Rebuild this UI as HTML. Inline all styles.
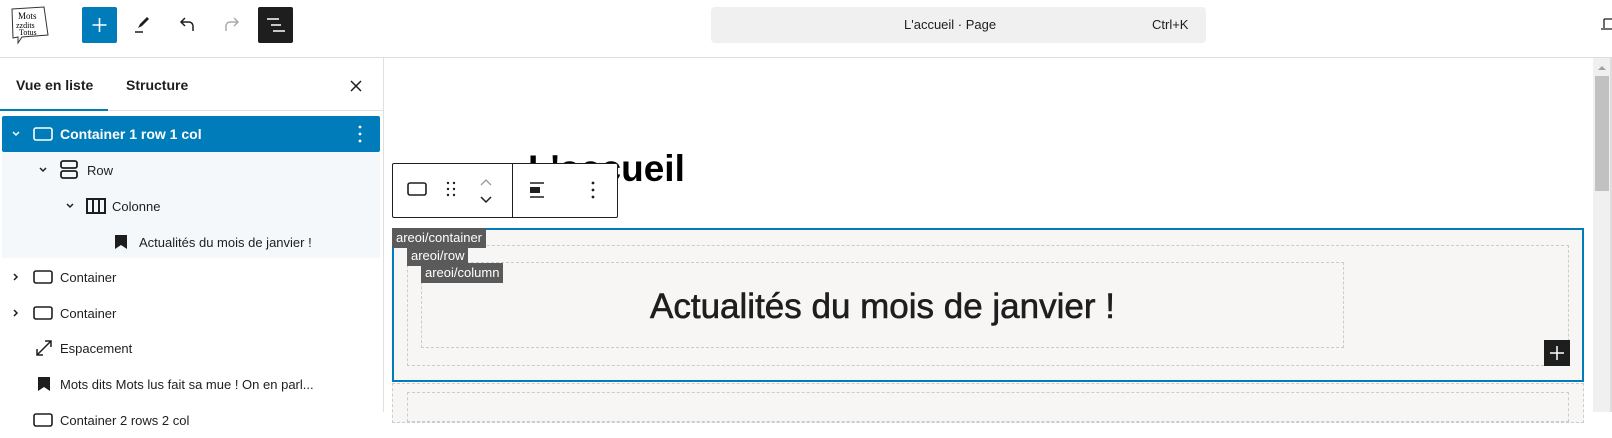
<!DOCTYPE html>
<html><head><meta charset="utf-8"><style>
*{box-sizing:border-box;margin:0;padding:0}
body{width:1612px;height:412px;overflow:hidden;background:#fff;font-family:"Liberation Sans",sans-serif;color:#1e1e1e;position:relative}
.a{position:absolute}
.row{position:absolute;left:2px;width:378px;height:36px;font-size:13px;display:flex;align-items:center}
.lbl{position:absolute;background:#5a5a5a;color:#fff;font-size:13px;height:20px;line-height:20px;padding:0 4px}
</style></head><body>
<!-- top bar -->
<div class="a" style="left:0;top:57px;width:1612px;height:1px;background:#ddd"></div>
<svg class="a" style="left:10px;top:5px" width="42" height="40" viewBox="0 0 42 40"><path d="M2 4 L34 2 L38 30 L12 32 L8 38 L8 32 L3 33Z" fill="#fff" stroke="#333" stroke-width="1"/><text x="8" y="14" font-size="9" font-family="Liberation Serif">Mots</text><text x="6" y="23" font-size="8" font-family="Liberation Serif">zzdits</text><text x="9" y="30" font-size="8" font-family="Liberation Serif">Totus</text></svg>
<div class="a" style="left:82px;top:7px;width:35px;height:36px;background:#007cba;border-radius:2px"></div>
<svg class="a" style="left:82px;top:7px" width="35" height="36"><path d="M17.5 11v14M10.5 18h14" stroke="#fff" stroke-width="1.6"/></svg>
<svg class="a" style="left:130px;top:12px" width="24" height="24"><path d="M8 16l2-4 7-7 2 2-7 7z" fill="#1e1e1e"/><path d="M5 20h8" stroke="#1e1e1e" stroke-width="1.5"/></svg>
<svg class="a" style="left:175px;top:12px" width="24" height="24"><path d="M18 19v-5a4 4 0 0 0-4-4H6M10 6l-4 4 4 4" fill="none" stroke="#1e1e1e" stroke-width="1.5"/></svg>
<svg class="a" style="left:220px;top:12px" width="24" height="24"><path d="M6 19v-5a4 4 0 0 1 4-4h8M14 6l4 4-4 4" fill="none" stroke="#aaa" stroke-width="1.5"/></svg>
<div class="a" style="left:258px;top:7px;width:35px;height:36px;background:#1e1e1e;border-radius:2px"></div>
<svg class="a" style="left:258px;top:7px" width="35" height="36"><path d="M9 12h12M13 18h10M15 24h12" stroke="#fff" stroke-width="1.5"/></svg>
<div class="a" style="left:711px;top:7px;width:495px;height:36px;background:#f0f0f0;border-radius:4px;font-size:13px;color:#1e1e1e"><span class="a" style="left:193px;top:10px">L'accueil · Page</span><span class="a" style="left:441px;top:10px">Ctrl+K</span></div>
<svg class="a" style="left:1600px;top:16px" width="12" height="16"><path d="M4 3h10v9M4 3v9M1 13h13" fill="none" stroke="#1e1e1e" stroke-width="1.3"/></svg>
<!-- sidebar -->
<div class="a" style="left:0;top:58px;width:384px;height:354px;background:#fff;border-right:1px solid #e0e0e0"></div>
<div class="a" style="left:16px;top:77px;font-size:14px;font-weight:bold">Vue en liste</div>
<div class="a" style="left:126px;top:77px;font-size:14px;font-weight:bold">Structure</div>
<svg class="a" style="left:348px;top:78px" width="16" height="16"><path d="M3 3l10 10M13 3L3 13" stroke="#1e1e1e" stroke-width="1.5"/></svg>
<div class="a" style="left:0;top:110px;width:384px;height:1px;background:#e0e0e0"></div>
<div class="a" style="left:0;top:109px;width:108px;height:2px;background:#007cba"></div>
<div class="a" style="left:2px;top:152px;width:378px;height:106px;background:#f5f8fb"></div>
<div class="row" style="top:116px;background:#007cba;color:#fff;border-radius:2px;font-weight:bold;font-size:14px">
<svg class="a" style="left:8px;top:12px" width="12" height="12"><path d="M3 4l3 3 3-3" fill="none" stroke="#fff" stroke-width="1.5"/></svg>
<svg class="a" style="left:30px;top:9px" width="22" height="18"><rect x="2" y="3" width="18" height="12" rx="2" fill="none" stroke="#fff" stroke-width="1.6"/></svg>
<span class="a" style="left:58px;top:10px">Container 1 row 1 col</span>
<svg class="a" style="left:355px;top:8px" width="6" height="20"><circle cx="3" cy="3" r="1.4" fill="#fff"/><circle cx="3" cy="10" r="1.4" fill="#fff"/><circle cx="3" cy="17" r="1.4" fill="#fff"/></svg></div>
<div class="row" style="top:152px">
<svg class="a" style="left:35px;top:12px" width="12" height="12"><path d="M3 4l3 3 3-3" fill="none" stroke="#1e1e1e" stroke-width="1.5"/></svg>
<svg class="a" style="left:56px;top:6px" width="22" height="24"><rect x="3" y="3" width="16" height="7" rx="2" fill="none" stroke="#1e1e1e" stroke-width="1.8"/><rect x="3" y="13" width="16" height="7" rx="2" fill="none" stroke="#1e1e1e" stroke-width="1.8"/></svg>
<span class="a" style="left:85px;top:11px">Row</span></div>
<div class="row" style="top:188px">
<svg class="a" style="left:62px;top:12px" width="12" height="12"><path d="M3 4l3 3 3-3" fill="none" stroke="#1e1e1e" stroke-width="1.5"/></svg>
<svg class="a" style="left:83px;top:8px" width="22" height="20"><rect x="2" y="3" width="18" height="14" fill="none" stroke="#1e1e1e" stroke-width="2"/><path d="M8 3v14M14 3v14" stroke="#1e1e1e" stroke-width="2"/></svg>
<span class="a" style="left:110px;top:11px">Colonne</span></div>
<div class="row" style="top:224px">
<svg class="a" style="left:112px;top:10px" width="14" height="16"><path d="M1 1h12v14l-6-4-6 4z" fill="#1e1e1e"/></svg>
<span class="a" style="left:137px;top:11px">Actualités du mois de janvier !</span></div>
<div class="row" style="top:259px">
<svg class="a" style="left:8px;top:12px" width="12" height="12"><path d="M4 3l3 3-3 3" fill="none" stroke="#1e1e1e" stroke-width="1.5"/></svg>
<svg class="a" style="left:30px;top:9px" width="22" height="18"><rect x="2" y="3" width="18" height="12" rx="2" fill="none" stroke="#1e1e1e" stroke-width="1.6"/></svg>
<span class="a" style="left:58px;top:11px">Container</span></div>
<div class="row" style="top:295px">
<svg class="a" style="left:8px;top:12px" width="12" height="12"><path d="M4 3l3 3-3 3" fill="none" stroke="#1e1e1e" stroke-width="1.5"/></svg>
<svg class="a" style="left:30px;top:9px" width="22" height="18"><rect x="2" y="3" width="18" height="12" rx="2" fill="none" stroke="#1e1e1e" stroke-width="1.6"/></svg>
<span class="a" style="left:58px;top:11px">Container</span></div>
<div class="row" style="top:330px">
<svg class="a" style="left:32px;top:8px" width="20" height="20"><path d="M3 17L17 3M11 3h6v6M3 11v6h6" fill="none" stroke="#1e1e1e" stroke-width="1.5"/></svg>
<span class="a" style="left:58px;top:11px">Espacement</span></div>
<div class="row" style="top:366px">
<svg class="a" style="left:35px;top:10px" width="14" height="16"><path d="M1 1h12v14l-6-4-6 4z" fill="#1e1e1e"/></svg>
<span class="a" style="left:58px;top:11px">Mots dits Mots lus fait sa mue ! On en parl...</span></div>
<div class="row" style="top:402px">
<svg class="a" style="left:30px;top:9px" width="22" height="18"><rect x="2" y="3" width="18" height="12" rx="2" fill="none" stroke="#1e1e1e" stroke-width="1.6"/></svg>
<span class="a" style="left:58px;top:11px">Container 2 rows 2 col</span></div>
<!-- canvas -->
<div class="a" style="left:528px;top:148px;font-size:37px;font-weight:bold;color:#000">L'accueil</div>
<div class="a" style="left:392px;top:228px;width:1192px;height:154px;background:#f7f6f5;border:2px solid #007cba"></div>
<div class="a" style="left:407px;top:245px;width:1162px;height:121px;border:1px dashed #ccc"></div>
<div class="a" style="left:421px;top:262px;width:923px;height:86px;border:1px dashed #ccc"></div>
<div class="a" style="left:421px;top:287px;width:923px;text-align:center;font-size:35px;color:#1e1e1e;-webkit-text-stroke:0.6px #1e1e1e">Actualités du mois de janvier !</div>
<div class="lbl" style="left:392px;top:228px">areoi/container</div>
<div class="lbl" style="left:407px;top:246px">areoi/row</div>
<div class="lbl" style="left:421px;top:263px">areoi/column</div>
<div class="a" style="left:1544px;top:340px;width:26px;height:26px;background:#1e1e1e"></div>
<svg class="a" style="left:1544px;top:340px" width="26" height="26"><path d="M13 6v14M6 13h14" stroke="#fff" stroke-width="1.5"/></svg>
<div class="a" style="left:392px;top:383px;width:1192px;height:40px;background:#f7f6f5;border:1px dashed #ccc"></div>
<div class="a" style="left:407px;top:392px;width:1162px;height:30px;border:1px dashed #ccc"></div>
<!-- toolbar -->
<div class="a" style="left:392px;top:163px;width:226px;height:55px;background:#fff;border:1px solid #1e1e1e;border-radius:2px"></div>
<div class="a" style="left:512px;top:163px;width:1px;height:55px;background:#1e1e1e"></div>
<svg class="a" style="left:406px;top:180px" width="22" height="20"><rect x="2" y="3" width="18" height="12" rx="2" fill="none" stroke="#1e1e1e" stroke-width="1.6"/></svg>
<svg class="a" style="left:446px;top:180px" width="10" height="18"><g fill="#1e1e1e"><circle cx="2" cy="3" r="1.2"/><circle cx="8" cy="3" r="1.2"/><circle cx="2" cy="9" r="1.2"/><circle cx="8" cy="9" r="1.2"/><circle cx="2" cy="15" r="1.2"/><circle cx="8" cy="15" r="1.2"/></g></svg>
<svg class="a" style="left:478px;top:176px" width="16" height="30"><path d="M3 9l5-5 5 5" fill="none" stroke="#999" stroke-width="1.3"/><path d="M3 21l5 5 5-5" fill="none" stroke="#1e1e1e" stroke-width="1.5"/></svg>
<svg class="a" style="left:528px;top:180px" width="20" height="20"><path d="M2 3h14M2 17h14" stroke="#1e1e1e" stroke-width="1.5"/><rect x="2" y="7" width="10" height="6" fill="#1e1e1e"/></svg>
<svg class="a" style="left:590px;top:180px" width="6" height="20"><circle cx="3" cy="3" r="1.4" fill="#1e1e1e"/><circle cx="3" cy="10" r="1.4" fill="#1e1e1e"/><circle cx="3" cy="17" r="1.4" fill="#1e1e1e"/></svg>
<!-- scrollbar -->
<div class="a" style="left:1593px;top:58px;width:17px;height:354px;background:#f0f0f0"></div>
<div class="a" style="left:1595px;top:76px;width:14px;height:115px;background:#c1c1c1"></div>
<svg class="a" style="left:1596px;top:64px" width="12" height="8"><path d="M2 6l4-4 4 4z" fill="#a0a0a0"/></svg>
<div class="a" style="left:1610px;top:58px;width:2px;height:354px;background:#ddd"></div>
</body></html>
